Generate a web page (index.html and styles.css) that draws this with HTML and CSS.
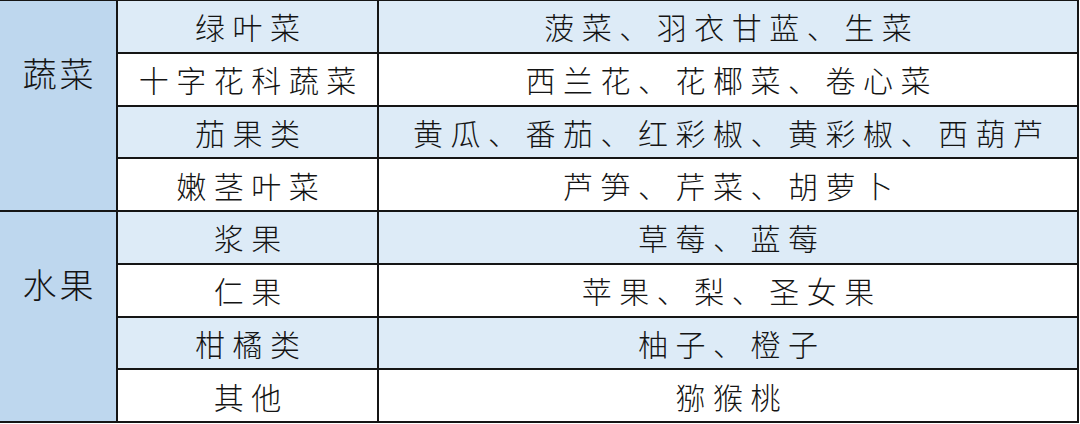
FILE: index.html
```html
<!DOCTYPE html>
<html lang="zh-CN">
<head>
<meta charset="utf-8">
<title>蔬菜水果分类</title>
<link rel="stylesheet" href="styles.css">
</head>
<body>
<table class="produce">
  <colgroup>
    <col class="c-group">
    <col class="c-kind">
    <col class="c-items">
  </colgroup>
  <tbody>
    <tr class="r-blue">
      <th class="group" rowspan="4">蔬菜</th>
      <td>绿叶菜</td>
      <td>菠菜、羽衣甘蓝、生菜</td>
    </tr>
    <tr class="r-white">
      <td>十字花科蔬菜</td>
      <td>西兰花、花椰菜、卷心菜</td>
    </tr>
    <tr class="r-blue">
      <td>茄果类</td>
      <td>黄瓜、番茄、红彩椒、黄彩椒、西葫芦</td>
    </tr>
    <tr class="r-white">
      <td>嫩茎叶菜</td>
      <td>芦笋、芹菜、胡萝卜</td>
    </tr>
    <tr class="r-blue">
      <th class="group" rowspan="4">水果</th>
      <td>浆果</td>
      <td>草莓、蓝莓</td>
    </tr>
    <tr class="r-white">
      <td>仁果</td>
      <td>苹果、梨、圣女果</td>
    </tr>
    <tr class="r-blue">
      <td>柑橘类</td>
      <td>柚子、橙子</td>
    </tr>
    <tr class="r-white">
      <td>其他</td>
      <td>猕猴桃</td>
    </tr>
  </tbody>
</table>
</body>
</html>
```

FILE: styles.css
```css
html, body {
  margin: 0;
  padding: 0;
  background: #ffffff;
}

.produce {
  width: 1078px;
  border-collapse: collapse;
  table-layout: fixed;
  font-family: "Noto Sans CJK SC", "Noto Sans", sans-serif;
  font-size: 30px;
  font-weight: 300;
  color: #141414;
}

.c-group { width: 117px; }
.c-kind { width: 261px; }
.c-items { width: 700px; }

.produce th,
.produce td {
  border: 2px solid #151515;
  padding: 0;
  height: 50.75px;
  text-align: center;
  vertical-align: middle;
  line-height: 1;
  letter-spacing: 7.5px;
  text-indent: 7.5px;
  font-weight: 300;
}

.produce tr:first-child th,
.produce tr:first-child td {
  border-top-width: 1px;
}

.produce .group {
  background: #bed7ee;
  border-left: none;
  vertical-align: top;
  padding-top: 55px;
  font-size: 34px;
  letter-spacing: 3px;
  text-indent: 3px;
}

.r-blue td {
  background: #ddebf7;
}

.r-white td {
  background: #ffffff;
}
```
